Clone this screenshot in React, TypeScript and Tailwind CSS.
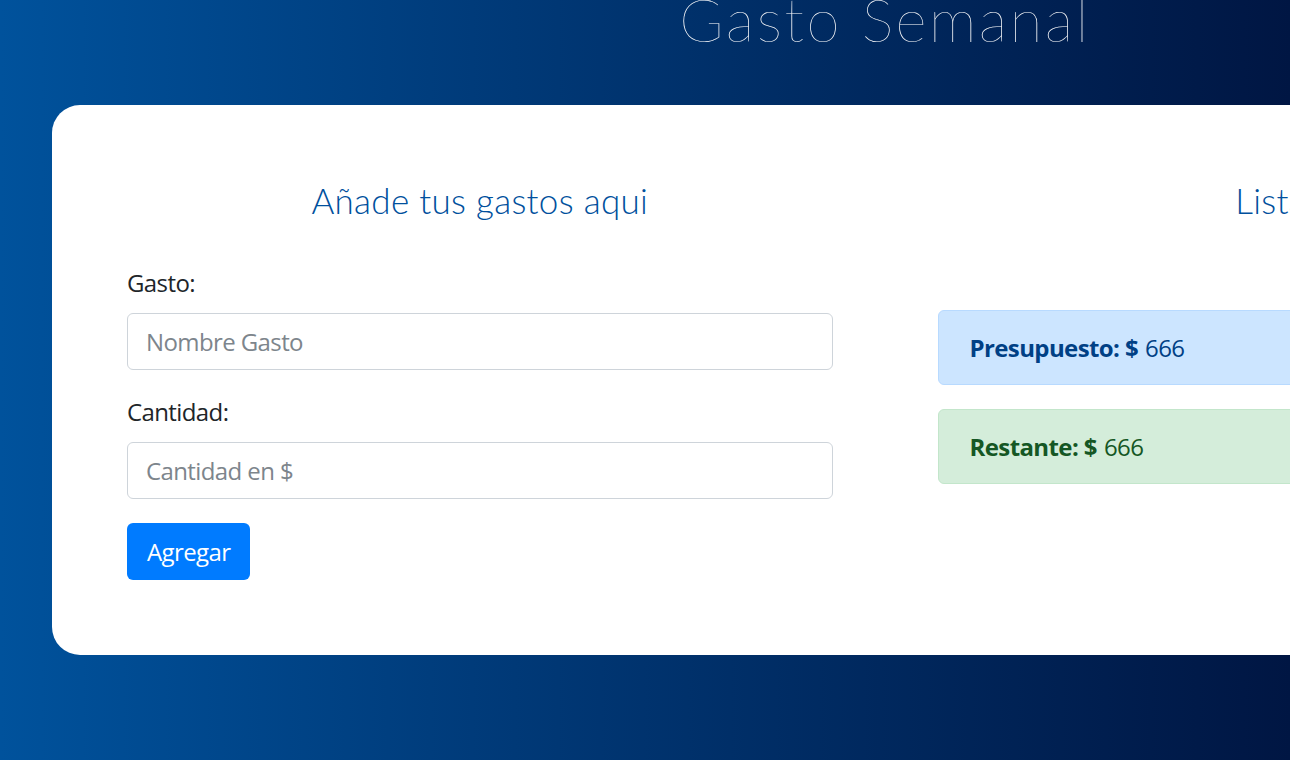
import React from 'react';

const sans = "font-['Open_Sans',sans-serif]";
const thin = "font-['Lato',sans-serif]";

const Field: React.FC<{ label: string; placeholder: string }> = ({ label, placeholder }) => (
  <div className="mb-6">
    <label className="block mb-3 text-[24px] leading-[36px] text-[#212529] tracking-[-0.6px]">{label}</label>
    <input
      type="text"
      placeholder={placeholder}
      className="block w-full h-[57px] px-[18px] text-[24px] text-[#495057] bg-white border border-[#ced4da] rounded-[6px] outline-none placeholder:text-[#7d858c] tracking-[-0.6px]"
    />
  </div>
);

const Alert: React.FC<{ label: string; value: string; tone: 'blue' | 'green' }> = ({ label, value, tone }) => (
  <div
    className={
      tone === 'blue'
        ? 'mb-6 h-[75px] flex items-center px-[31px] rounded-[6px] border border-[#b8daff] bg-[#cce5ff] text-[#004085] text-[24px] tracking-[-0.6px]'
        : 'mb-6 h-[75px] flex items-center px-[31px] rounded-[6px] border border-[#c3e6cb] bg-[#d4edda] text-[#155724] text-[24px] tracking-[-0.6px]'
    }
  >
    <span className="font-bold">{label}</span>
    <span className="ml-[7px]">{value}</span>
  </div>
);

export default function App() {
  return (
    <div className={`w-[1290px] h-[760px] overflow-hidden bg-gradient-to-r from-[#00529c] to-[#001643] ${sans}`}>
      <div className="w-[1770px] flex flex-col">
        <h1 className={`${thin} font-thin text-white text-center text-[60px] leading-none -mt-[11px] h-[116px] tracking-[2.5px]`}>
          Gasto Semanal
        </h1>

        <div className="mx-[52px] bg-white rounded-[28px] px-[75px] pt-[75px] pb-[75px] grid grid-cols-2 gap-[105px]">
          {/* Formulario */}
          <div>
            <h2 className={`${thin} font-light text-[#00509d] text-center text-[35px] leading-[40px] mb-[45px] tracking-[0.3px]`}>
              Añade tus gastos aqui
            </h2>
            <form onSubmit={e => e.preventDefault()}>
              <Field label="Gasto:" placeholder="Nombre Gasto" />
              <Field label="Cantidad:" placeholder="Cantidad en $" />
              <button
                type="submit"
                className="h-[57px] px-[20px] bg-[#007bff] text-white text-[24px] rounded-[6px] tracking-[-0.6px]"
              >
                Agregar
              </button>
            </form>
          </div>

          {/* Listado */}
          <div>
            <h2 className={`${thin} font-light text-[#00509d] text-center text-[35px] leading-[40px] mb-[90px] tracking-[0.3px]`}>
              Listado
            </h2>
            <Alert label="Presupuesto: $" value="666" tone="blue" />
            <Alert label="Restante: $" value="666" tone="green" />
          </div>
        </div>
      </div>
    </div>
  );
}
